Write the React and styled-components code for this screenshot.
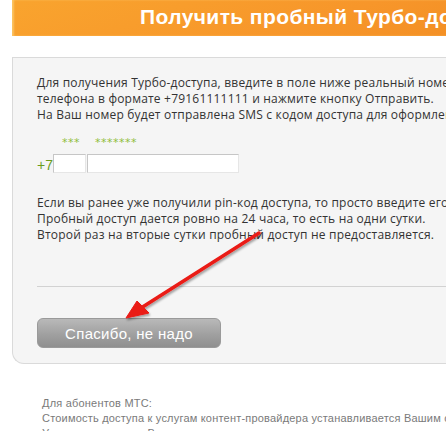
import React from 'react'
import styled, { createGlobalStyle } from 'styled-components'

const GlobalStyle = createGlobalStyle`
  body {
    margin: 0;
    background: #ffffff;
    font-family: "Open Sans", Tahoma, sans-serif;
  }
`

const Page = styled.div`
  width: 446px;
  height: 431px;
  overflow: hidden;
  padding-left: 12px;
  box-sizing: border-box;
`

const Header = styled.div`
  width: 640px;
  height: 36px;
  box-sizing: border-box;
  padding-left: 128px;
  background: linear-gradient(160deg, #f9a42e 0%, #f7962a 50%, #f49126 68%, #f0821e 100%);
  box-shadow: inset 2px 0 2px rgba(255, 230, 150, 0.5);
  color: #ffffff;
  font-family: "Liberation Sans", Arial, sans-serif;
  font-weight: bold;
  font-size: 21px;
  line-height: 33px;
  letter-spacing: 0.4px;
  white-space: nowrap;
`

const Card = styled.div`
  position: relative;
  width: 700px;
  margin-top: 21px;
  box-sizing: border-box;
  padding: 17px 0 15px 24px;
  background: #f5f5f5;
  border: 1px solid #dadada;
  border-right: none;
  border-radius: 0 0 0 12px;
`

const Text = styled.p`
  margin: ${p => p.$top || 0}px 0 0;
  font-size: 12px;
  line-height: 16px;
  color: #333333;
  white-space: nowrap;
  letter-spacing: 0.2px;
`

const Hints = styled.div`
  display: flex;
  gap: 15px;
  margin: 12px 0 0 25px;
  font-family: "DejaVu Sans", Verdana, sans-serif;
  font-size: 11px;
  line-height: 15px;
  color: #8fbd3c;
  letter-spacing: 0.5px;
`

const PhoneRow = styled.div`
  display: flex;
  align-items: flex-end;
  margin-top: 4px;
`

const Prefix = styled.span`
  font-family: "Liberation Sans", Arial, sans-serif;
  font-size: 14px;
  line-height: 16px;
  color: #6a9c1c;
`

const Field = styled.input`
  width: ${p => p.$w}px;
  height: 19px;
  box-sizing: border-box;
  margin: 0 1px 0 0;
  padding: 0 3px;
  background: #ffffff;
  border: 1px solid #e6e6e6;
  border-top-color: #c6c6c6;
  border-left-color: #c6c6c6;
  outline: none;
`

const Divider = styled.div`
  height: 1px;
  margin-top: 43px;
  background: #d2d2d2;
`

const Button = styled.button`
  display: block;
  width: 184px;
  height: 30px;
  margin-top: 31px;
  padding: 0;
  border: 1px solid #9a9a9a;
  border-radius: 6px;
  background: linear-gradient(#b9b9b9, #a0a0a0 55%, #8f8f8f);
  color: #ffffff;
  font-family: "Liberation Sans", Arial, sans-serif;
  font-size: 15px;
  letter-spacing: 0.3px;
  text-align: center;
`

const Arrow = styled.svg`
  position: absolute;
  left: 0;
  top: 0;
  pointer-events: none;
  overflow: visible;
`

const Footer = styled.div`
  margin-top: 32px;
  padding-left: 30px;
  font-family: "Liberation Sans", Arial, sans-serif;
  font-size: 11px;
  line-height: 15px;
  color: #7a7a7a;
  letter-spacing: 0.2px;
  white-space: nowrap;
`

export default function App() {
  // arrow coordinates are relative to the card (card origin at 12, 57)
  return (
    <Page>
      <GlobalStyle />
      <Header>Получить пробный Турбо-доступ</Header>
      <Card>
        <Text>
          Для получения Турбо-доступа, введите в поле ниже реальный номер<br />
          телефона в формате +79161111111 и нажмите кнопку Отправить.<br />
          На Ваш номер будет отправлена SMS с кодом доступа для оформления.
        </Text>
        <Hints>
          <span>***</span>
          <span>*******</span>
        </Hints>
        <PhoneRow>
          <Prefix>+7</Prefix>
          <Field $w={33} />
          <Field $w={152} />
        </PhoneRow>
        <Text $top={22}>
          Если вы ранее уже получили pin-код доступа, то просто введите его в поле.<br />
          Пробный доступ дается ровно на 24 часа, то есть на одни сутки.<br />
          Второй раз на вторые сутки пробный доступ не предоставляется.
        </Text>
        <Divider />
        <Button>Спасибо, не надо</Button>
        <Arrow width="1" height="1">
          <defs>
            <filter id="sh" x="-20%" y="-20%" width="140%" height="140%">
              <feDropShadow dx="1" dy="2" stdDeviation="1.2" floodColor="#000" floodOpacity="0.35" />
            </filter>
          </defs>
          <g filter="url(#sh)" fill="#ea1a14" stroke="#ea1a14">
            <line x1="246" y1="175" x2="128" y2="250" strokeWidth="3.5" strokeLinecap="round" />
            <polygon points="113,260 124,243 136,255" strokeWidth="1" strokeLinejoin="round" />
          </g>
        </Arrow>
      </Card>
      <Footer>
        Для абонентов МТС:<br />
        Стоимость доступа к услугам контент-провайдера устанавливается Вашим сотовым оператором.<br />
        Узнать стоимость в Вашем регионе, а также по короткому номеру, можно на сайте www.mts.ru
      </Footer>
    </Page>
  )
}
